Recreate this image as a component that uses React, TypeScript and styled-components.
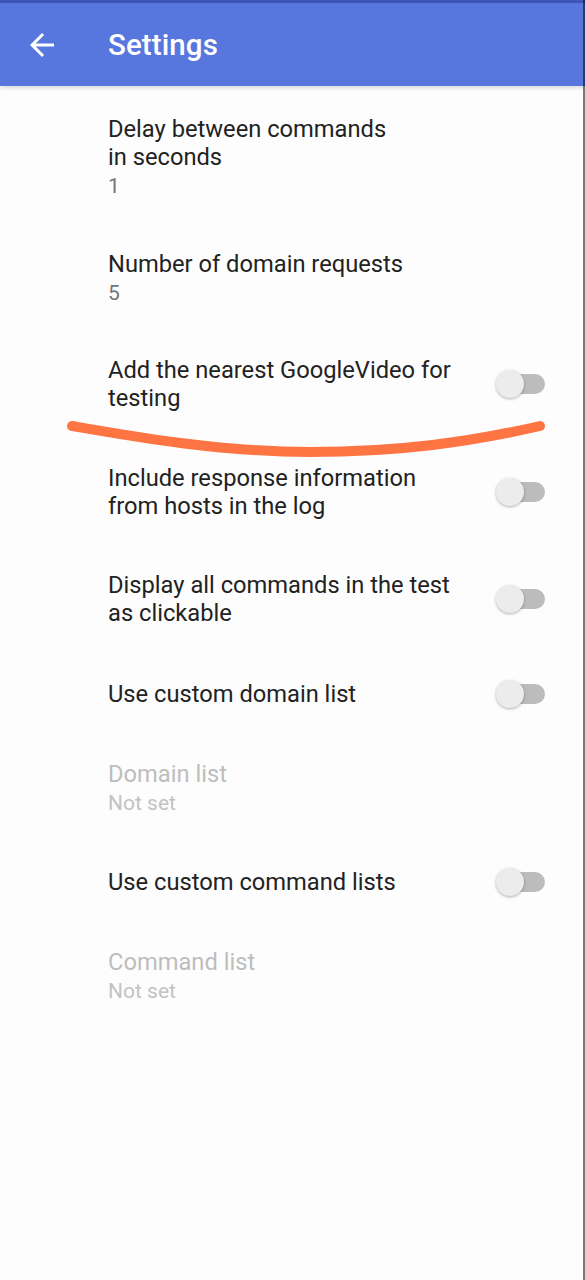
import * as React from 'react'
import styled, { createGlobalStyle } from 'styled-components'

const GlobalStyle = createGlobalStyle`
  html, body {
    margin: 0;
    padding: 0;
    background: #fdfdfd;
  }
  body {
    font-family: Roboto, "Noto Sans", "Liberation Sans", sans-serif;
  }
`

const Page = styled.div`
  position: relative;
  width: 585px;
  height: 1280px;
  display: flex;
  flex-direction: column;
  background: #fdfdfd;
  overflow: hidden;

  &::after {
    content: '';
    position: absolute;
    top: 0;
    right: 0;
    width: 2px;
    height: 100%;
    background: rgba(0, 0, 0, 0.52);
    z-index: 2;
  }
`

const StatusStrip = styled.div`
  height: 3px;
  background: #3f56b6;
`

const Toolbar = styled.header`
  height: 83px;
  display: flex;
  align-items: center;
  background: #5777de;
  box-shadow: 0 2px 4px rgba(0, 0, 0, 0.14);
  position: relative;
  z-index: 1;
`

const BackButton = styled.button`
  width: 36px;
  height: 36px;
  margin-left: 24px;
  padding: 0;
  border: none;
  background: transparent;
  display: flex;
  align-items: center;
  justify-content: center;
`

const Title = styled.h1`
  margin: 0 0 0 48px;
  font-size: 29.5px;
  font-weight: 500;
  color: #fff;
  letter-spacing: 0.1px;
`

const PrefList = styled.div`
  display: flex;
  flex-direction: column;
  padding-top: 3px;
`

const PrefRow = styled.div`
  display: flex;
  align-items: center;
  padding: 26px 40px 25.5px 108px;
`

const PrefText = styled.div`
  flex: 1;
  display: flex;
  flex-direction: column;
`

const PrefTitle = styled.div<{ $disabled?: boolean }>`
  font-size: 23.7px;
  line-height: 28px;
  color: ${(p) => (p.$disabled ? '#bdbdbd' : '#222222')};
`

const PrefSummary = styled.div<{ $disabled?: boolean }>`
  margin-top: 3px;
  font-size: 21px;
  line-height: 24px;
  color: ${(p) => (p.$disabled ? '#c2c2c2' : '#757575')};
`

const Switch = styled.div`
  position: relative;
  width: 50px;
  height: 30px;
  flex-shrink: 0;
  display: flex;
  align-items: center;
`

const Track = styled.div`
  width: 48px;
  height: 20px;
  margin-left: 2px;
  border-radius: 10px;
  background: #bcbcbc;
`

const Thumb = styled.div`
  position: absolute;
  left: 1px;
  top: 1px;
  width: 28px;
  height: 28px;
  border-radius: 50%;
  background: #ececec;
  box-shadow: 0 1px 3px rgba(0, 0, 0, 0.3);
`

const Scribble = styled.svg`
  position: absolute;
  left: 0;
  top: 0;
  pointer-events: none;
`

type Pref = {
  title: React.ReactNode
  summary?: string
  toggle?: boolean
  disabled?: boolean
}

const prefs: Pref[] = [
  { title: <>Delay between commands<br />in seconds</>, summary: '1' },
  { title: 'Number of domain requests', summary: '5' },
  { title: <>Add the nearest GoogleVideo for<br />testing</>, toggle: true },
  { title: <>Include response information<br />from hosts in the log</>, toggle: true },
  { title: <>Display all commands in the test<br />as clickable</>, toggle: true },
  { title: 'Use custom domain list', toggle: true },
  { title: 'Domain list', summary: 'Not set', disabled: true },
  { title: 'Use custom command lists', toggle: true },
  { title: 'Command list', summary: 'Not set', disabled: true },
]

const App = () => {
  return (
    <Page>
      <GlobalStyle />
      <StatusStrip />
      <Toolbar>
        <BackButton aria-label="Back">
          <svg width="36" height="36" viewBox="0 0 24 24">
            <path
              fill="#fff"
              d="M20 11H7.83l5.59-5.59L12 4l-8 8 8 8 1.41-1.41L7.83 13H20v-2z"
            />
          </svg>
        </BackButton>
        <Title>Settings</Title>
      </Toolbar>
      <PrefList>
        {prefs.map((p, i) => (
          <PrefRow key={i}>
            <PrefText>
              <PrefTitle $disabled={p.disabled}>{p.title}</PrefTitle>
              {p.summary && <PrefSummary $disabled={p.disabled}>{p.summary}</PrefSummary>}
            </PrefText>
            {p.toggle && (
              <Switch>
                <Track />
                <Thumb />
              </Switch>
            )}
          </PrefRow>
        ))}
      </PrefList>
      <Scribble width="585" height="1280" viewBox="0 0 585 1280">
        <path
          d="M72 426 C 130 436, 220 452, 310 452 S 470 442, 540 426"
          fill="none"
          stroke="#ff7443"
          strokeWidth="10"
          strokeLinecap="round"
        />
      </Scribble>
    </Page>
  )
}

export default App
